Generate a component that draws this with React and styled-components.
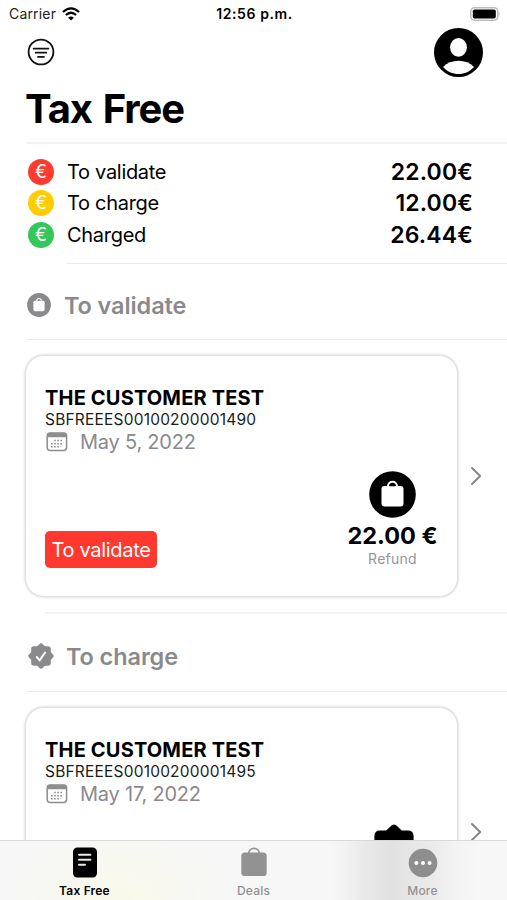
import React from 'react';
import styled, { createGlobalStyle } from 'styled-components';

const GlobalStyle = createGlobalStyle`
  * {
    box-sizing: border-box;
  }
  body {
    margin: 0;
    background: #fff;
    color: #000;
    font-family: Inter, "Liberation Sans", sans-serif;
  }
`;

const Screen = styled.div`
  display: flex;
  flex-direction: column;
  width: 507px;
  height: 900px;
  overflow: hidden;
  background: #fff;
`;

const StatusBar = styled.div`
  display: grid;
  grid-template-columns: 1fr auto 1fr;
  align-items: center;
  flex: none;
  height: 27px;
  padding: 0 7px 0 9px;
`;
const Carrier = styled.div`
  display: flex;
  align-items: center;
  gap: 6px;
  color: #222;
  font-size: 14px;
  letter-spacing: 0.18px;
`;
const Clock = styled.div`
  font-size: 14px;
  font-weight: 600;
  letter-spacing: 0.6px;
`;
const Battery = styled.svg`
  justify-self: end;
  display: block;
`;

const NavBar = styled.div`
  display: flex;
  align-items: center;
  justify-content: space-between;
  flex: none;
  height: 50px;
  padding: 0 24px 0 27px;
`;
const PageTitle = styled.h1`
  flex: none;
  height: 65px;
  margin: 0;
  padding-left: 25px;
  font-size: 40px;
  font-weight: 700;
  line-height: 63px;
  letter-spacing: -1.1px;
  word-spacing: 2.5px;
`;

const Content = styled.div`
  flex: 1;
  min-height: 0;
  overflow: hidden;
`;
const Divider = styled.div`
  height: ${props => props.size || 1}px;
  margin-left: ${props => props.inset}px;
  background: ${props => props.tone || '#ebebeb'};
`;

const Summary = styled.div`
  display: flex;
  flex-direction: column;
  height: 119px;
  padding: 12px 34px 0 28px;
`;
const SummaryRow = styled.div`
  display: flex;
  align-items: center;
  height: 31.5px;
`;
const Coin = styled.div`
  display: flex;
  align-items: center;
  justify-content: center;
  width: 26px;
  height: 26px;
  border-radius: 50%;
  background: ${props => props.color};
  color: #fff;
  font-size: 18px;
  font-weight: 400;
  line-height: 26px;
`;
const SummaryLabel = styled.div`
  flex: 1;
  padding-left: 13px;
  font-size: 20px;
  letter-spacing: -0.3px;
`;
const SummaryAmount = styled.div`
  font-size: 23px;
  font-weight: 600;
  letter-spacing: 0.15px;
`;

const SectionHeader = styled.div`
  display: flex;
  align-items: center;
  gap: ${props => props.gap}px;
  height: ${props => props.height}px;
  padding: ${props => props.drop}px 0 0 27px;
  color: #8a8a8d;
`;
const SectionTitle = styled.h2`
  margin: 0;
  font-size: 23.5px;
  font-weight: 600;
  letter-spacing: -0.1px;
`;

const Chevron = styled.svg`
  display: block;
  margin-left: 12px;
`;
const CardRow = styled.div`
  display: flex;
  align-items: center;
  padding: 15px 0 15px 25px;
  ${Chevron} {
    margin-top: ${props => props.$chevronDrop || 0}px;
  }
`;
const Card = styled.div`
  display: flex;
  flex-direction: column;
  width: 433px;
  height: 242px;
  padding: 30px 19px ${props => props.$bottom}px 19px;
  border: 1px solid #e2e2e2;
  border-radius: 19px;
  background: #fff;
  box-shadow: 0 0 3px rgba(0, 0, 0, 0.22);
`;
const CustomerName = styled.div`
  font-size: 20px;
  font-weight: 700;
  line-height: 25px;
  letter-spacing: 0.17px;
`;
const Code = styled.div`
  color: #1c1c1c;
  font-size: 15.5px;
  line-height: 18px;
  letter-spacing: 0.2px;
`;
const DateLine = styled.div`
  display: flex;
  align-items: center;
  gap: 12px;
  padding-left: 1px;
  color: #8a8a8d;
  font-size: 20px;
  line-height: 26px;
  letter-spacing: -0.22px;
`;
const CardBottom = styled.div`
  display: flex;
  align-items: flex-end;
  justify-content: space-between;
  flex: 1;
`;
const Status = styled.div`
  height: 37px;
  width: 112px;
  border-radius: 5px;
  background: #ff3830;
  color: #fff;
  font-size: 20px;
  line-height: 38px;
  text-align: center;
  letter-spacing: -0.3px;
`;
const Refund = styled.div`
  display: flex;
  flex-direction: column;
  align-items: center;
  width: ${props => props.$width}px;
`;
const RefundAmount = styled.div`
  font-size: 23.5px;
  font-weight: 700;
  line-height: 28px;
  padding-top: 4px;
  white-space: nowrap;
`;
const RefundLabel = styled.div`
  color: #96969a;
  font-size: 14px;
  line-height: 18px;
  letter-spacing: 0.25px;
`;

const TabBar = styled.div`
  display: grid;
  grid-template-columns: repeat(3, 1fr);
  flex: none;
  height: 60px;
  border-top: 1px solid #d9d9d9;
  background:
    radial-gradient(ellipse 110px 70px at 23% 100%, rgba(252, 252, 220, 0.5), rgba(252, 252, 220, 0) 100%),
    linear-gradient(90deg, rgba(0, 0, 0, 0) 65%, rgba(0, 0, 0, 0.015) 68%, rgba(0, 0, 0, 0.06) 72%, rgba(0, 0, 0, 0.09) 77%, rgba(0, 0, 0, 0.05) 85%, rgba(0, 0, 0, 0.015) 90%, rgba(0, 0, 0, 0) 95%),
    #f7f7f7;
`;
const Tab = styled.div`
  display: flex;
  flex-direction: column;
  align-items: center;
  padding-top: 5px;
  color: ${props => props.$active ? '#000' : '#929292'};
  font-size: 12px;
  font-weight: ${props => props.$active ? 600 : 500};
  line-height: 15px;
  letter-spacing: 0.2px;
  svg {
    display: block;
    margin-bottom: 5px;
  }
`;

const WifiIcon = () => (
  <svg width="18" height="14" viewBox="0 0 18 14" fill="none" stroke="#000" strokeWidth="2.3">
    <path d="M1 5 Q9 -2.2 17 5" />
    <path d="M3.9 8 Q9 3.6 14.1 8" />
    <path d="M9 13.6 L6.1 10.7 Q9 8.4 11.9 10.7 Z" fill="#000" stroke="none" />
  </svg>
);

const FilterIcon = () => (
  <svg width="28" height="28" viewBox="0 0 28 28" fill="none" stroke="#111" strokeLinecap="round">
    <circle cx="14" cy="14" r="12.4" strokeWidth="1.8" />
    <path d="M6.6 10.6 H21.4 M8.8 14.7 H19.2 M11 18.9 H17" strokeWidth="1.7" />
  </svg>
);

const AvatarIcon = () => (
  <svg width="49" height="49" viewBox="0 0 49 49">
    <circle cx="24.5" cy="24.5" r="24.5" />
    <ellipse cx="24.5" cy="19.3" rx="8.4" ry="9.4" fill="#fff" />
    <path d="M9 39 C13 34.8 18.5 32.7 24.5 32.7 C30.5 32.7 36 34.8 40 39 C36 43.5 30.5 46 24.5 46 C18.5 46 13 43.5 9 39 Z" fill="#fff" />
  </svg>
);

const BagCircle = ({ size, color }) => (
  <svg width={size} height={size} viewBox="0 0 47 47">
    <circle cx="23.5" cy="23.5" r="23.3" fill={color} />
    <rect x="12.5" y="15" width="22" height="20.5" rx="3" fill="#fff" />
    <path d="M19 15.5 C19 9.2 28 9.2 28 15.5" fill="none" stroke="#fff" strokeWidth="2" />
    <path d="M20.6 15.3 C21 12.4 26 12.4 26.4 15.3 Z" fill={color} />
  </svg>
);

const SealIcon = ({ size, color }) => (
  <svg width={size} height={size} viewBox="0 0 28 28">
    <path
      d="M12.8 2.8 Q14 1.4 15.2 2.8 L17.5 5 H21 Q23 5 23 7 V10.5 L25.2 12.8 Q26.6 14 25.2 15.2 L23 17.5 V21 Q23 23 21 23 H17.5 L15.2 25.2 Q14 26.6 12.8 25.2 L10.5 23 H7 Q5 23 5 21 V17.5 L2.8 15.2 Q1.4 14 2.8 12.8 L5 10.5 V7 Q5 5 7 5 H10.5 Z"
      fill={color}
      stroke={color}
      strokeWidth="1.6"
      strokeLinejoin="round"
    />
    <path d="M9.8 15 L12.6 18.4 L18 10.6" fill="none" stroke="#fff" strokeWidth="2" strokeLinecap="round" strokeLinejoin="round" />
  </svg>
);

const CalendarIcon = () => (
  <svg width="22" height="20" viewBox="0 0 22 20">
    <rect x="1.2" y="1" width="19.4" height="17.6" rx="3" fill="none" stroke="#8e8e90" strokeWidth="1.5" />
    <path d="M1 5.2 V4 Q1 0.8 4 0.8 H18 Q21 0.8 21 4 V5.2 Z" fill="#8e8e90" />
    <path
      d="M8.2 8.6 H17.5 M5 11.7 H17.5 M5 14.8 H14.6"
      stroke="#8e8e90"
      strokeWidth="1.5"
      strokeDasharray="1.6 1.5"
    />
  </svg>
);

const DocIcon = () => (
  <svg width="26" height="32" viewBox="0 0 26 32">
    <rect x="1" y="1.5" width="24" height="30" rx="4.5" fill="#000" />
    <path d="M7 8.8 H18.4 M7 13.8 H18.4 M7 18.8 H13" stroke="#e8e8e8" strokeWidth="2" strokeLinecap="round" />
  </svg>
);

const BagIcon = () => (
  <svg width="26" height="32" viewBox="0 0 26 32">
    <rect x="0.3" y="6.5" width="25.4" height="23.5" rx="3.6" fill="#929292" />
    <path d="M7.5 8 C7.5 0.6 18.5 0.6 18.5 8" fill="none" stroke="#929292" strokeWidth="1.8" />
  </svg>
);

const MoreIcon = () => (
  <svg width="30" height="32" viewBox="0 0 30 32">
    <circle cx="15" cy="17" r="14.3" fill="#8e8e8e" />
    <circle cx="8.4" cy="17" r="2" fill="#fff" />
    <circle cx="15" cy="17" r="2" fill="#fff" />
    <circle cx="21.6" cy="17" r="2" fill="#fff" />
  </svg>
);

const totals = [
  { label: 'To validate', amount: '22.00€', color: '#ff3b30' },
  { label: 'To charge', amount: '12.00€', color: '#ffcc00' },
  { label: 'Charged', amount: '26.44€', color: '#34c759' },
];

const Ticket = ({ code, date, status, amount, icon, bottom, refundWidth, chevronDrop }) => (
  <CardRow $chevronDrop={chevronDrop}>
    <Card $bottom={bottom}>
      <CustomerName>THE CUSTOMER TEST</CustomerName>
      <Code>{code}</Code>
      <DateLine>
        <CalendarIcon />
        {date}
      </DateLine>
      <CardBottom>
        {status ? <Status>{status}</Status> : <div />}
        <Refund $width={refundWidth}>
          {icon}
          {amount && <RefundAmount>{amount}</RefundAmount>}
          {amount && <RefundLabel>Refund</RefundLabel>}
        </Refund>
      </CardBottom>
    </Card>
    <Chevron width="12" height="20" viewBox="0 0 12 20" fill="none" stroke="#858585" strokeWidth="1.9" strokeLinecap="round" strokeLinejoin="round">
      <path d="M2 2 L10.2 10 L2 18" />
    </Chevron>
  </CardRow>
);

class App extends React.Component {
  render() {
    return (
      <Screen>
        <GlobalStyle />
        <StatusBar>
          <Carrier>
            Carrier
            <WifiIcon />
          </Carrier>
          <Clock>12:56 p.m.</Clock>
          <Battery width="32" height="14" viewBox="0 0 32 14">
            <rect x="2.8" y="0.8" width="27" height="12.4" rx="3.6" fill="#fff" stroke="#bdbdbd" strokeWidth="1.5" />
            <rect x="4.8" y="2.4" width="23" height="9.2" rx="1.8" />
            <path d="M30.6 4.8 Q32.4 7 30.6 9.2 Z" fill="#ababab" />
          </Battery>
        </StatusBar>
        <NavBar>
          <FilterIcon />
          <AvatarIcon />
        </NavBar>
        <PageTitle>Tax Free</PageTitle>
        <Content>
          <Divider inset={26} size={2} tone="#f3f3f3" />
          <Summary>
            {totals.map(row => (
              <SummaryRow key={row.label}>
                <Coin color={row.color}>€</Coin>
                <SummaryLabel>{row.label}</SummaryLabel>
                <SummaryAmount>{row.amount}</SummaryAmount>
              </SummaryRow>
            ))}
          </Summary>
          <Divider inset={67} />
          <SectionHeader gap={13} height={75} drop={7}>
            <BagCircle size={24} color="#8a8a8d" />
            <SectionTitle>To validate</SectionTitle>
          </SectionHeader>
          <Divider inset={26} />
          <Ticket
            code="SBFREEES00100200001490"
            date="May 5, 2022"
            status="To validate"
            amount="22.00 €"
            icon={<BagCircle size={47} color="#000" />}
            bottom={28}
            refundWidth={91}
          />
          <Divider inset={45} size={2} tone="#f3f3f3" />
          <SectionHeader gap={11} height={77} drop={7}>
            <SealIcon size={28} color="#8a8a8d" />
            <SectionTitle>To charge</SectionTitle>
          </SectionHeader>
          <Divider inset={26} />
          <Ticket
            code="SBFREEES00100200001495"
            date="May 17, 2022"
            icon={<SealIcon size={56} color="#000" />}
            bottom={70}
            refundWidth={88}
            chevronDrop={7}
          />
        </Content>
        <TabBar>
          <Tab $active>
            <DocIcon />
            Tax Free
          </Tab>
          <Tab>
            <BagIcon />
            Deals
          </Tab>
          <Tab>
            <MoreIcon />
            More
          </Tab>
        </TabBar>
      </Screen>
    );
  }
}

export default App;
